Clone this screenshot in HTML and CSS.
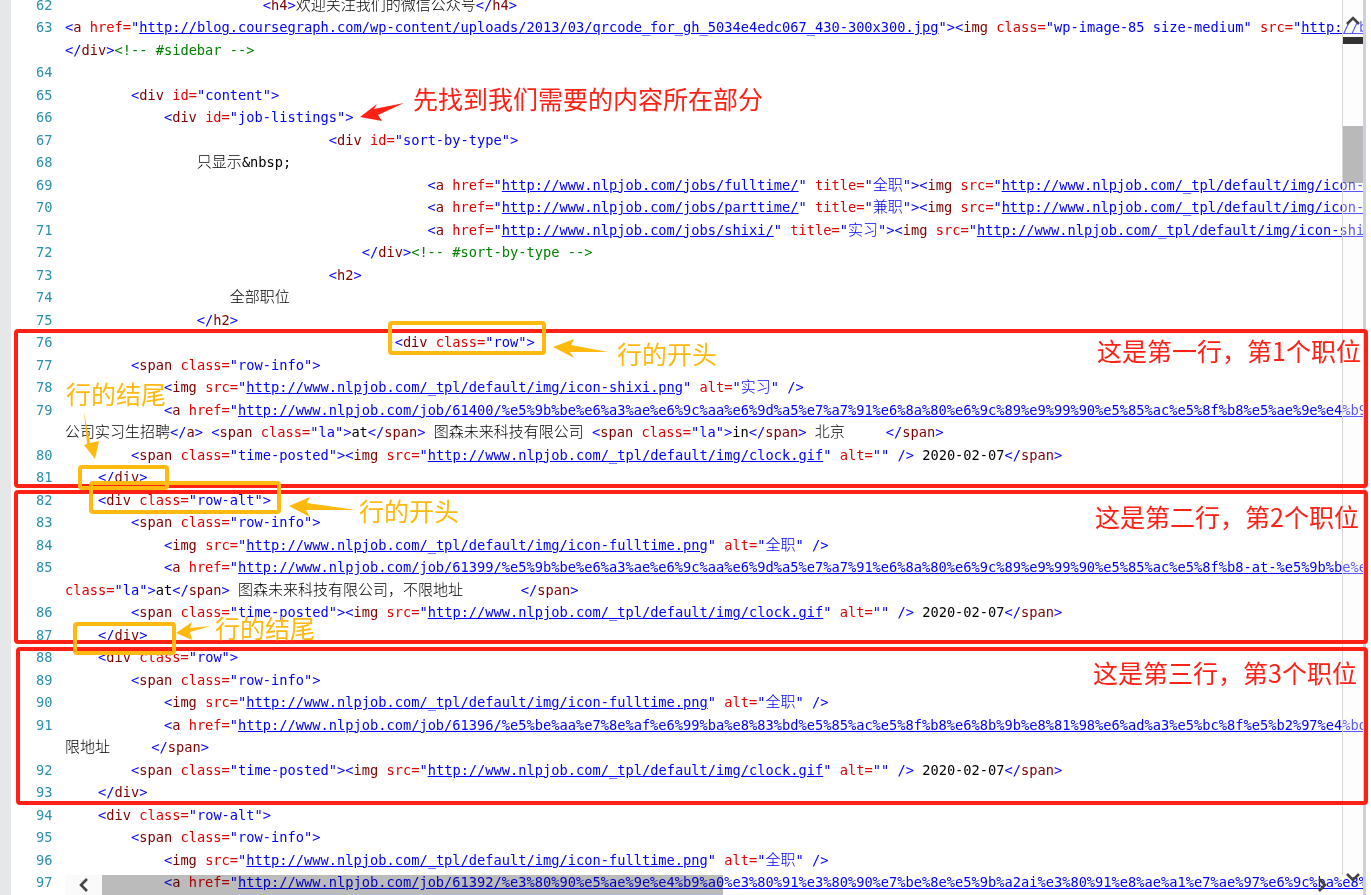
FILE: index.html
```html
<!DOCTYPE html>
<html lang="zh">
<head>
<meta charset="utf-8">
<title>view-source</title>
<link rel="stylesheet" href="styles.css">
</head>
<body>
<div class="viewer">
<div class="code">
<div class="ln"><span class="no">62</span><span class="src">                        <b>&lt;</b><i>h4</i><b>&gt;</b><span class="c">欢迎关注我们的微信公众号</span><b>&lt;/</b><i>h4</i><b>&gt;</b></span></div>
<div class="ln"><span class="no">63</span><span class="src"><b>&lt;</b><i>a</i> <u>href=</u><b>"</b><a>http://blog.coursegraph.com/wp-content/uploads/2013/03/qrcode_for_gh_5034e4edc067_430-300x300.jpg</a><b>"&gt;&lt;</b><i>img</i> <u>class=</u><b>"wp-image-85 size-medium"</b> <u>src=</u><b>"</b><a>http://blog.coursegraph.com/wp-content</a></span></div>
<div class="ln"><span class="no"></span><span class="src"><b>&lt;/</b><i>div</i><b>&gt;</b><em>&lt;!-- #sidebar --&gt;</em></span></div>
<div class="ln"><span class="no">64</span><span class="src"></span></div>
<div class="ln"><span class="no">65</span><span class="src">        <b>&lt;</b><i>div</i> <u>id=</u><b>"content"&gt;</b></span></div>
<div class="ln"><span class="no">66</span><span class="src">            <b>&lt;</b><i>div</i> <u>id=</u><b>"job-listings"&gt;</b></span></div>
<div class="ln"><span class="no">67</span><span class="src">                                <b>&lt;</b><i>div</i> <u>id=</u><b>"sort-by-type"&gt;</b></span></div>
<div class="ln"><span class="no">68</span><span class="src">                <span class="c">只显示</span>&amp;nbsp;</span></div>
<div class="ln"><span class="no">69</span><span class="src">                                            <b>&lt;</b><i>a</i> <u>href=</u><b>"</b><a>http://www.nlpjob.com/jobs/fulltime/</a><b>"</b> <u>title=</u><b>"<span class="c">全职</span>"&gt;&lt;</b><i>img</i> <u>src=</u><b>"</b><a>http://www.nlpjob.com/_tpl/default/img/icon-fulltime.png</a></span></div>
<div class="ln"><span class="no">70</span><span class="src">                                            <b>&lt;</b><i>a</i> <u>href=</u><b>"</b><a>http://www.nlpjob.com/jobs/parttime/</a><b>"</b> <u>title=</u><b>"<span class="c">兼职</span>"&gt;&lt;</b><i>img</i> <u>src=</u><b>"</b><a>http://www.nlpjob.com/_tpl/default/img/icon-parttime.png</a></span></div>
<div class="ln"><span class="no">71</span><span class="src">                                            <b>&lt;</b><i>a</i> <u>href=</u><b>"</b><a>http://www.nlpjob.com/jobs/shixi/</a><b>"</b> <u>title=</u><b>"<span class="c">实习</span>"&gt;&lt;</b><i>img</i> <u>src=</u><b>"</b><a>http://www.nlpjob.com/_tpl/default/img/icon-shixi.png</a></span></div>
<div class="ln"><span class="no">72</span><span class="src">                                    <b>&lt;/</b><i>div</i><b>&gt;</b><em>&lt;!-- #sort-by-type --&gt;</em></span></div>
<div class="ln"><span class="no">73</span><span class="src">                                <b>&lt;</b><i>h2</i><b>&gt;</b></span></div>
<div class="ln"><span class="no">74</span><span class="src">                    <span class="c">全部职位</span></span></div>
<div class="ln"><span class="no">75</span><span class="src">                <b>&lt;/</b><i>h2</i><b>&gt;</b></span></div>
<div class="ln"><span class="no">76</span><span class="src">                                        <b>&lt;</b><i>div</i> <u>class=</u><b>"row"&gt;</b></span></div>
<div class="ln"><span class="no">77</span><span class="src">        <b>&lt;</b><i>span</i> <u>class=</u><b>"row-info"&gt;</b></span></div>
<div class="ln"><span class="no">78</span><span class="src">            <b>&lt;</b><i>img</i> <u>src=</u><b>"</b><a>http://www.nlpjob.com/_tpl/default/img/icon-shixi.png</a><b>"</b> <u>alt=</u><b>"<span class="c">实习</span>"</b> <b>/&gt;</b></span></div>
<div class="ln"><span class="no">79</span><span class="src">            <b>&lt;</b><i>a</i> <u>href=</u><b>"</b><a>http://www.nlpjob.com/job/61400/%e5%9b%be%e6%a3%ae%e6%9c%aa%e6%9d%a5%e7%a7%91%e6%8a%80%e6%9c%89%e9%99%90%e5%85%ac%e5%8f%b8%e5%ae%9e%e4%b9%a0%e7%94%9f</a></span></div>
<div class="ln"><span class="no"></span><span class="src"><span class="c">公司实习生招聘</span><b>&lt;/</b><i>a</i><b>&gt;</b> <b>&lt;</b><i>span</i> <u>class=</u><b>"la"&gt;</b>at<b>&lt;/</b><i>span</i><b>&gt;</b> <span class="c">图森未来科技有限公司</span> <b>&lt;</b><i>span</i> <u>class=</u><b>"la"&gt;</b>in<b>&lt;/</b><i>span</i><b>&gt;</b> <span class="c">北京</span>     <b>&lt;/</b><i>span</i><b>&gt;</b></span></div>
<div class="ln"><span class="no">80</span><span class="src">        <b>&lt;</b><i>span</i> <u>class=</u><b>"time-posted"&gt;&lt;</b><i>img</i> <u>src=</u><b>"</b><a>http://www.nlpjob.com/_tpl/default/img/clock.gif</a><b>"</b> <u>alt=</u><b>""</b> <b>/&gt;</b> 2020-02-07<b>&lt;/</b><i>span</i><b>&gt;</b></span></div>
<div class="ln"><span class="no">81</span><span class="src">    <b>&lt;/</b><i>div</i><b>&gt;</b></span></div>
<div class="ln"><span class="no">82</span><span class="src">    <b>&lt;</b><i>div</i> <u>class=</u><b>"row-alt"&gt;</b></span></div>
<div class="ln"><span class="no">83</span><span class="src">        <b>&lt;</b><i>span</i> <u>class=</u><b>"row-info"&gt;</b></span></div>
<div class="ln"><span class="no">84</span><span class="src">            <b>&lt;</b><i>img</i> <u>src=</u><b>"</b><a>http://www.nlpjob.com/_tpl/default/img/icon-fulltime.png</a><b>"</b> <u>alt=</u><b>"<span class="c">全职</span>"</b> <b>/&gt;</b></span></div>
<div class="ln"><span class="no">85</span><span class="src">            <b>&lt;</b><i>a</i> <u>href=</u><b>"</b><a>http://www.nlpjob.com/job/61399/%e5%9b%be%e6%a3%ae%e6%9c%aa%e6%9d%a5%e7%a7%91%e6%8a%80%e6%9c%89%e9%99%90%e5%85%ac%e5%8f%b8-at-%e5%9b%be%e6%a3%ae%e6%9c%aa</a></span></div>
<div class="ln"><span class="no"></span><span class="src"><u>class=</u><b>"la"&gt;</b>at<b>&lt;/</b><i>span</i><b>&gt;</b> <span class="c">图森未来科技有限公司，不限地址</span>       <b>&lt;/</b><i>span</i><b>&gt;</b></span></div>
<div class="ln"><span class="no">86</span><span class="src">        <b>&lt;</b><i>span</i> <u>class=</u><b>"time-posted"&gt;&lt;</b><i>img</i> <u>src=</u><b>"</b><a>http://www.nlpjob.com/_tpl/default/img/clock.gif</a><b>"</b> <u>alt=</u><b>""</b> <b>/&gt;</b> 2020-02-07<b>&lt;/</b><i>span</i><b>&gt;</b></span></div>
<div class="ln"><span class="no">87</span><span class="src">    <b>&lt;/</b><i>div</i><b>&gt;</b></span></div>
<div class="ln"><span class="no">88</span><span class="src">    <b>&lt;</b><i>div</i> <u>class=</u><b>"row"&gt;</b></span></div>
<div class="ln"><span class="no">89</span><span class="src">        <b>&lt;</b><i>span</i> <u>class=</u><b>"row-info"&gt;</b></span></div>
<div class="ln"><span class="no">90</span><span class="src">            <b>&lt;</b><i>img</i> <u>src=</u><b>"</b><a>http://www.nlpjob.com/_tpl/default/img/icon-fulltime.png</a><b>"</b> <u>alt=</u><b>"<span class="c">全职</span>"</b> <b>/&gt;</b></span></div>
<div class="ln"><span class="no">91</span><span class="src">            <b>&lt;</b><i>a</i> <u>href=</u><b>"</b><a>http://www.nlpjob.com/job/61396/%e5%be%aa%e7%8e%af%e6%99%ba%e8%83%bd%e5%85%ac%e5%8f%b8%e6%8b%9b%e8%81%98%e6%ad%a3%e5%bc%8f%e5%b2%97%e4%bd%8d%e4%b8%8d</a></span></div>
<div class="ln"><span class="no"></span><span class="src"><span class="c">限地址</span>     <b>&lt;/</b><i>span</i><b>&gt;</b></span></div>
<div class="ln"><span class="no">92</span><span class="src">        <b>&lt;</b><i>span</i> <u>class=</u><b>"time-posted"&gt;&lt;</b><i>img</i> <u>src=</u><b>"</b><a>http://www.nlpjob.com/_tpl/default/img/clock.gif</a><b>"</b> <u>alt=</u><b>""</b> <b>/&gt;</b> 2020-02-07<b>&lt;/</b><i>span</i><b>&gt;</b></span></div>
<div class="ln"><span class="no">93</span><span class="src">    <b>&lt;/</b><i>div</i><b>&gt;</b></span></div>
<div class="ln"><span class="no">94</span><span class="src">    <b>&lt;</b><i>div</i> <u>class=</u><b>"row-alt"&gt;</b></span></div>
<div class="ln"><span class="no">95</span><span class="src">        <b>&lt;</b><i>span</i> <u>class=</u><b>"row-info"&gt;</b></span></div>
<div class="ln"><span class="no">96</span><span class="src">            <b>&lt;</b><i>img</i> <u>src=</u><b>"</b><a>http://www.nlpjob.com/_tpl/default/img/icon-fulltime.png</a><b>"</b> <u>alt=</u><b>"<span class="c">全职</span>"</b> <b>/&gt;</b></span></div>
<div class="ln"><span class="no">97</span><span class="src">            <b>&lt;</b><i>a</i> <u>href=</u><b>"</b><a>http://www.nlpjob.com/job/61392/%e3%80%90%e5%ae%9e%e4%b9%a0%e3%80%91%e3%80%90%e7%be%8e%e5%9b%a2ai%e3%80%91%e8%ae%a1%e7%ae%97%e6%9c%ba%e8%a7%86%e8%a7%89</a></span></div>
</div>

<div class="vbar">
  <svg class="arrow-up" width="16" height="10" viewBox="0 0 16 10"><path d="M2 9 L8 3 L14 9" /></svg>
  <div class="vmark"></div>
  <div class="vthumb"></div>
  <svg class="arrow-down" width="16" height="10" viewBox="0 0 16 10"><path d="M2 2 L8 8 L14 2" /></svg>
</div>
<div class="hbar">
  <div class="hstart"><svg width="10" height="16" viewBox="0 0 10 16"><path d="M8 2 L2 8 L8 14" /></svg></div>
  <div class="hthumb"></div>
  <svg class="arrow-right" width="10" height="16" viewBox="0 0 10 16"><path d="M2 2 L8 8 L2 14" /></svg>
</div>
<div class="edge"></div>

<div class="box red r1"></div>
<div class="box red r2"></div>
<div class="box red r3"></div>
<div class="box orange o1"></div>
<div class="box orange o2"></div>
<div class="box orange o3"></div>
<div class="box orange o4"></div>

<svg class="marks" width="1371" height="895" viewBox="0 0 1371 895">
  <polygon class="mred" points="360,117 377,104 374,109 404,103 378,115 382,121" />
  <polygon class="mor" points="553,347 574,339 571,345 608,352 570,352 574,358" />
  <polygon class="mor" points="84,412 90,443 99,441 95,459 84,445 87,444" />
  <polygon class="mor" points="289,506 310,497 307,503 356,510 306,510 310,517" />
  <polygon class="mor" points="176,633 192,622 190,628 211,626 190,632 192,640" />
</svg>

<div class="note nr n1">先找到我们需要的内容所在部分</div>
<div class="note nr n2">这是第一行，第1个职位</div>
<div class="note nr n3">这是第二行，第2个职位</div>
<div class="note nr n4">这是第三行，第3个职位</div>
<div class="note no2 n5">行的开头</div>
<div class="note no2 n6">行的结尾</div>
<div class="note no2 n7">行的开头</div>
<div class="note no2 n8">行的结尾</div>
</div>
</body>
</html>
```
FILE: styles.css
```css
* { box-sizing: border-box; }
html, body { margin: 0; height: 100%; background: #fff; }
.viewer {
  position: relative;
  width: 1371px;
  height: 895px;
  overflow: hidden;
  background: #fff;
  border-left: 11px solid #e6e7e9;
}
.code {
  width: 1352px;
  margin-top: -6.25px;
  font-family: "DejaVu Sans Mono", "Liberation Mono", monospace;
  font-size: 13.7px;
  color: #000;
}
.ln { display: flex; height: 22.5px; line-height: 22.5px; }
.no { flex: 0 0 54px; padding-left: 25px; color: #2a8fb0; }
.src { flex: 1 1 auto; min-width: 0; overflow: hidden; white-space: pre; }
.src b { font-weight: 400; color: #0000ff; }
.src i { font-style: normal; color: #800000; }
.src u { text-decoration: none; color: #e00000; }
.src a { color: #0000ff; text-decoration: underline; }
.src em { font-style: normal; color: #008000; }
.c {
  font-family: "Noto Sans CJK SC", sans-serif;
  font-size: 15px;
  line-height: 1;
  font-weight: 300;
}

.vbar {
  position: absolute; left: 1331px; top: 0; width: 21px; height: 875px;
  background: rgba(250, 250, 250, 0.35);
  border-left: 1px solid #d8d8d8;
}
.vmark { position: absolute; left: 0; top: 37px; width: 20px; height: 7px; background: #333; }
.vthumb { position: absolute; left: 0; top: 126px; width: 20px; height: 57px; background: #bbb; mix-blend-mode: multiply; }
.arrow-up { position: absolute; left: 2px; top: 15px; }
.arrow-down { position: absolute; left: 2px; top: 872px; }
.vbar svg path, .hbar svg path { fill: none; stroke: #444; stroke-width: 2.6; }
.hbar { position: absolute; left: 54px; top: 875px; width: 1298px; height: 20px; }
.hstart { position: absolute; left: 0; top: 0; width: 37px; height: 20px; background: #fafafa; display: flex; align-items: center; justify-content: center; }
.hthumb { position: absolute; left: 37px; top: 0; width: 621px; height: 20px; background: #bbb; mix-blend-mode: multiply; }
.arrow-right { position: absolute; left: 1252px; top: 2px; }
.edge { position: absolute; left: 1352px; top: 0; width: 3px; height: 895px; background: #cdd0df; }

.box { position: absolute; }
.red { border: 4px solid #ff2016; border-radius: 4px; left: 3px; width: 1354px; }
.r1 { top: 329px; height: 159px; }
.r2 { top: 490px; height: 154px; }
.r3 { top: 647px; height: 158px; left: 5px; width: 1352px; }
.orange { border: 4px solid #ffb90f; border-radius: 4px; }
.o1 { left: 377px; top: 321px; width: 158px; height: 34px; }
.o2 { left: 67px; top: 465px; width: 91px; height: 25px; }
.o3 { left: 78px; top: 481px; width: 192px; height: 33px; }
.o4 { left: 62px; top: 622px; width: 103px; height: 33px; }

.marks { position: absolute; left: -11px; top: 0; pointer-events: none; }
.mred { fill: #ff2016; }
.mor { fill: #ffb90f; }

.note {
  position: absolute;
  font-family: "Noto Sans CJK SC", sans-serif;
  font-size: 25px;
  line-height: 30px;
  white-space: nowrap;
}
.nr { color: #ff2016; }
.no2 { color: #ffb90f; }
.n1 { left: 402px; top: 83px; }
.n2 { left: 1086px; top: 335px; }
.n3 { left: 1084px; top: 501px; }
.n4 { left: 1082px; top: 657px; }
.n5 { left: 606px; top: 338px; }
.n6 { left: 55px; top: 378px; }
.n7 { left: 348px; top: 495px; }
.n8 { left: 204px; top: 612px; }
```
